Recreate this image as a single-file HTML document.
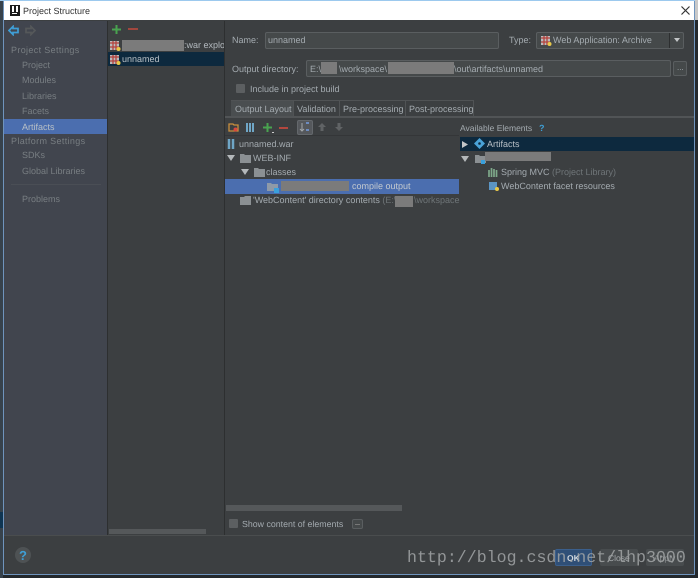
<!DOCTYPE html>
<html><head><meta charset="utf-8"><style>
html,body{margin:0;padding:0;background:#2a2c2e}
#r{position:relative;width:698px;height:578px;overflow:hidden;background:#23282c;font:9px "Liberation Sans",sans-serif;color:#a4abb0;text-rendering:geometricPrecision;filter:blur(.3px)}
#r div,#r svg,#r span.a{position:absolute}
.t{white-space:nowrap;line-height:12px}
.g{color:#787e82}
.b{background:#7b7b7b}
.f{background:#45494a;border:1px solid #5a5e60;box-sizing:border-box;border-radius:2px}
.l{background:#2d2f30}
</style></head><body><div id="r">
<div style="left:0;top:0;width:3px;height:578px;background:#37424c"></div>
<div style="left:0;top:512px;width:3px;height:16px;background:#0f3552"></div>
<div style="left:3px;top:0;width:692px;height:575px;background:#3c3f41;border:1px solid #6f94bd;box-sizing:border-box"></div>
<div style="left:4px;top:1px;width:690px;height:19px;background:#fff"></div>
<div style="left:0;top:0;width:698px;height:1px;background:#9cc9ee"></div>
<div style="left:695px;top:0;width:3px;height:20px;background:#c9c9c9"></div>
<div style="left:10px;top:5px;width:10px;height:11px;background:#1b1b1b"></div>
<div style="left:12px;top:6px;width:2px;height:6px;background:#fff"></div>
<div style="left:16px;top:6px;width:2px;height:6px;background:#fff"></div>
<div style="left:12px;top:13px;width:5px;height:1px;background:#fff"></div>
<div class="t" style="left:23px;top:5px;color:#333;font-size:9px">Project Structure</div>
<svg style="left:680px;top:5px" width="11" height="11"><path d="M1.5 1.5L9.5 9.5M9.5 1.5L1.5 9.5" stroke="#333" stroke-width="1.2"/></svg>

<div style="left:4px;top:21px;width:103px;height:514px;background:#41454e"></div>
<div class="l" style="left:107px;top:21px;width:1px;height:514px"></div>
<div class="l" style="left:224px;top:21px;width:1px;height:514px"></div>
<div style="left:4px;top:119px;width:103px;height:15px;background:#4b6eaf"></div>
<svg style="left:8px;top:25px" width="11" height="11"><path d="M1 5.5L5 1.5V3.5H10V7.5H5V9.5Z" fill="none" stroke="#3f9fd6" stroke-width="1.7"/></svg>
<svg style="left:25px;top:25px" width="11" height="11"><path d="M10 5.5L6 1.5V3.5H1V7.5H6V9.5Z" fill="none" stroke="#55585a" stroke-width="1.7"/></svg>
<div class="t g" style="left:11px;top:44px;letter-spacing:.35px">Project Settings</div>
<div class="t g" style="left:22px;top:59px">Project</div>
<div class="t g" style="left:22px;top:74px">Modules</div>
<div class="t g" style="left:22px;top:90px">Libraries</div>
<div class="t g" style="left:22px;top:105px">Facets</div>
<div class="t" style="left:22px;top:121px;color:#b9c0c6">Artifacts</div>
<div class="t g" style="left:11px;top:135px;letter-spacing:.35px">Platform Settings</div>
<div class="t g" style="left:22px;top:149px">SDKs</div>
<div class="t g" style="left:22px;top:165px">Global Libraries</div>
<div style="left:11px;top:184px;width:90px;height:1px;background:#4a4e55"></div>
<div class="t g" style="left:22px;top:193px">Problems</div>

<svg style="left:111px;top:24px" width="11" height="11"><path d="M5.5 1V10M1 5.5H10" stroke="#49a34f" stroke-width="2"/></svg>
<div style="left:128px;top:28px;width:10px;height:2px;background:#a1473e"></div>
<svg style="left:110px;top:40px" width="11" height="12"><rect x="0" y="1" width="9" height="9" fill="#b9bcbe"/><path d="M0 3H9M0 7H9M3 1V10M6 1V10" stroke="#b5413c" stroke-width="1.3"/><circle cx="8.5" cy="9" r="2" fill="#e8c94a"/></svg>
<div class="b" style="left:122px;top:40px;width:62px;height:11px"></div>
<div class="t" style="left:184px;top:39px;width:40px;overflow:hidden;color:#b4babf">:war exploded</div>
<div style="left:108px;top:52px;width:116px;height:14px;background:#0d293e"></div>
<svg style="left:110px;top:54px" width="11" height="12"><rect x="0" y="1" width="9" height="9" fill="#b9bcbe"/><path d="M0 3H9M0 7H9M3 1V10M6 1V10" stroke="#b5413c" stroke-width="1.3"/><circle cx="8.5" cy="9" r="2" fill="#e8c94a"/></svg>
<div class="t" style="left:122px;top:53px;color:#b9c0c6">unnamed</div>
<div style="left:109px;top:529px;width:97px;height:5px;background:#55585a"></div>

<div class="t" style="left:232px;top:34px">Name:</div>
<div class="f" style="left:265px;top:32px;width:234px;height:17px"></div>
<div class="t" style="left:268px;top:34px">unnamed</div>
<div class="t" style="left:509px;top:34px">Type:</div>
<div class="f" style="left:536px;top:32px;width:148px;height:17px"></div>
<div style="left:669px;top:33px;width:1px;height:15px;background:#2d2f30"></div>
<svg style="left:673px;top:37px" width="8" height="6"><path d="M1 1H7L4 5Z" fill="#c3c6c8"/></svg>
<svg style="left:541px;top:35px" width="11" height="12"><rect x="0" y="1" width="9" height="9" fill="#b9bcbe"/><path d="M0 3H9M0 7H9M3 1V10M6 1V10" stroke="#b5413c" stroke-width="1.3"/><circle cx="8.5" cy="9" r="2" fill="#e8c94a"/></svg>
<div class="t" style="left:553px;top:34px">Web Application: Archive</div>

<div class="t" style="left:232px;top:63px">Output directory:</div>
<div class="f" style="left:306px;top:60px;width:365px;height:17px"></div>
<div class="t" style="left:310px;top:63px">E:\</div>
<div class="b" style="left:321px;top:62px;width:16px;height:12px"></div>
<div class="t" style="left:339px;top:63px">\workspace\</div>
<div class="b" style="left:388px;top:62px;width:66px;height:12px"></div>
<div class="t" style="left:454px;top:63px">\out\artifacts\unnamed</div>
<div class="f" style="left:673px;top:61px;width:14px;height:15px"></div>
<div class="t" style="left:677px;top:62px;font-size:8px">...</div>
<div style="left:236px;top:84px;width:9px;height:9px;background:#5c5f61;border-radius:1px"></div>
<div class="t" style="left:250px;top:83px">Include in project build</div>

<div style="left:231px;top:100px;width:62px;height:16px;background:#4a4e50"></div>
<div style="left:225px;top:116px;width:469px;height:2px;background:#515456"></div>
<div style="left:293px;top:100px;width:1px;height:16px;background:#505355"></div>
<div style="left:339px;top:100px;width:1px;height:16px;background:#505355"></div>
<div style="left:405px;top:100px;width:1px;height:16px;background:#505355"></div>
<div style="left:473px;top:100px;width:1px;height:16px;background:#505355"></div>
<div style="left:231px;top:100px;width:243px;height:1px;background:#505355"></div>
<div class="t" style="left:235px;top:103px">Output Layout</div>
<div class="t" style="left:297px;top:103px">Validation</div>
<div class="t" style="left:343px;top:103px">Pre-processing</div>
<div class="t" style="left:409px;top:103px">Post-processing</div>

<svg style="left:228px;top:122px" width="11" height="11"><path d="M1 2H5L6 3H10V9H1Z" fill="none" stroke="#c98f3e" stroke-width="1.3"/><circle cx="7.5" cy="7.5" r="2" fill="#d8483e"/></svg>
<svg style="left:245px;top:122px" width="10" height="11"><path d="M2 1V10M5 1V10M8 1V10" stroke="#6fa6c6" stroke-width="2"/></svg>
<svg style="left:262px;top:122px" width="12" height="12"><path d="M5.5 1V10M1 5.5H10" stroke="#49a34f" stroke-width="2"/><rect x="10" y="10" width="2" height="1" fill="#ccc"/></svg>
<div style="left:279px;top:127px;width:9px;height:2px;background:#b3473e"></div>
<div style="left:297px;top:120px;width:16px;height:15px;background:#55585c;border:1px solid #64686c;box-sizing:border-box;border-radius:2px"></div>
<svg style="left:299px;top:122px" width="12" height="11"><path d="M3 1V9M1 7L3 9L5 7" fill="none" stroke="#a3a7aa"/><path d="M7 1H10M7 8H10" stroke="#6d8cc0" stroke-width="2"/></svg>
<svg style="left:317px;top:122px" width="10" height="10"><path d="M5 1L9 5H6.5V9H3.5V5H1Z" fill="#606365"/></svg>
<svg style="left:334px;top:122px" width="10" height="10"><path d="M5 9L9 5H6.5V1H3.5V5H1Z" fill="#606365"/></svg>
<div style="left:225px;top:135px;width:234px;height:1px;background:#343638"></div>

<svg style="left:227px;top:139px" width="9" height="10"><path d="M2 0V10M6 0V10" stroke="#6fa6c6" stroke-width="2.5"/></svg>
<div class="t" style="left:239px;top:138px">unnamed.war</div>
<svg style="left:227px;top:154px" width="8" height="7"><path d="M0 1H8L4 7Z" fill="#b4b8ba"/></svg>
<svg style="left:240px;top:153px" width="11" height="10"><path d="M0 1H4L5 2H11V10H0Z" fill="#8b9093"/></svg>
<div class="t" style="left:253px;top:152px">WEB-INF</div>
<svg style="left:241px;top:168px" width="8" height="7"><path d="M0 1H8L4 7Z" fill="#b4b8ba"/></svg>
<svg style="left:254px;top:167px" width="11" height="10"><path d="M0 1H4L5 2H11V10H0Z" fill="#8b9093"/></svg>
<div class="t" style="left:266px;top:166px">classes</div>
<div style="left:225px;top:179px;width:234px;height:15px;background:#4b6eaf"></div>
<svg style="left:267px;top:182px" width="13" height="12"><path d="M0 1H4L5 2H11V9H0Z" fill="#8e9aa8"/><rect x="7" y="6" width="5" height="5" fill="#3aa0dc"/></svg>
<div class="b" style="left:281px;top:181px;width:68px;height:10px"></div>
<div class="t" style="left:352px;top:180px;color:#c3c9cf">compile output</div>
<svg style="left:240px;top:195px" width="11" height="10"><path d="M0 2H4L5 1H11V10H0Z" fill="#8b9093"/></svg>
<div class="t" style="left:253px;top:194px">'WebContent' directory contents <span style="color:#6f7578">(E:\</span></div>
<div class="b" style="left:395px;top:196px;width:18px;height:11px"></div>
<div class="t" style="left:414px;top:194px;color:#6f7578">\workspace</div>

<div class="t" style="left:460px;top:122px;font-size:8.5px">Available Elements</div>
<div class="t" style="left:539px;top:122px;color:#3f9fd6;font-weight:bold">?</div>
<div style="left:460px;top:137px;width:234px;height:14px;background:#0d293e"></div>
<svg style="left:462px;top:141px" width="6" height="7"><path d="M0 0V7L6 3.5Z" fill="#c3c6c8"/></svg>
<svg style="left:474px;top:138px" width="11" height="11"><path d="M5.5 0L11 5.5L5.5 11L0 5.5Z" fill="#4aa3d8"/><circle cx="5.5" cy="5.5" r="1.3" fill="#0d293e"/></svg>
<div class="t" style="left:487px;top:138px;color:#b9c0c6">Artifacts</div>
<svg style="left:461px;top:155px" width="8" height="7"><path d="M0 1H8L4 7Z" fill="#b4b8ba"/></svg>
<svg style="left:475px;top:154px" width="12" height="11"><path d="M0 1H4L5 2H11V9H0Z" fill="#8b9093"/><rect x="6" y="6" width="4" height="4" fill="#3aa0dc"/></svg>
<div class="b" style="left:485px;top:152px;width:66px;height:9px"></div>
<svg style="left:488px;top:167px" width="11" height="11"><path d="M1 3V10M3.5 1V10M6 2V10M8.5 3V10" stroke="#7ea98a" stroke-width="1.7"/></svg>
<div class="t" style="left:501px;top:166px">Spring MVC <span style="color:#6f7578">(Project Library)</span></div>
<svg style="left:489px;top:181px" width="11" height="11"><rect width="8" height="8" y="1" fill="#5b95c4"/><circle cx="8" cy="8" r="2" fill="#e8c94a"/></svg>
<div class="t" style="left:501px;top:180px">WebContent facet resources</div>

<div style="left:226px;top:505px;width:176px;height:6px;background:#55585a"></div>
<div style="left:229px;top:519px;width:9px;height:9px;background:#5c5f61;border-radius:1px"></div>
<div class="t" style="left:242px;top:518px;font-size:8.8px">Show content of elements</div>
<div class="f" style="left:352px;top:519px;width:11px;height:10px"></div>
<div style="left:355px;top:524px;width:5px;height:1px;background:#777"></div>

<div style="left:4px;top:535px;width:690px;height:1px;background:#4a4d4e"></div>
<div style="left:15px;top:547px;width:16px;height:16px;border-radius:50%;background:#4e5254"></div>
<div class="t" style="left:15px;top:548px;width:16px;text-align:center;color:#3f9fd6;font-size:13px;font-weight:bold;line-height:15px">?</div>
<div style="left:555px;top:549px;width:37px;height:17px;background:#2f4f77;border-radius:2px;border:1px solid #3b5f8c;box-sizing:border-box"></div>
<div class="t" style="left:567px;top:552px;color:#d2d8de;font-weight:bold;font-size:8.5px">OK</div>
<div style="left:600px;top:549px;width:38px;height:17px;background:#484c4e;border-radius:2px"></div>
<div class="t" style="left:608px;top:552px;color:#a4a8aa;font-size:8.5px">Close</div>
<div style="left:646px;top:549px;width:38px;height:17px;background:#484c4e;border-radius:2px"></div>
<div class="t" style="left:654px;top:552px;color:#8a8e90;font-size:8.5px">Apply</div>
<div class="t" style="left:407px;top:548px;font:16.6px/20px 'Liberation Mono',monospace;color:#a2a5a6;opacity:.85">http://blog.csdn.net/lhp3000</div>
</div></body></html>
